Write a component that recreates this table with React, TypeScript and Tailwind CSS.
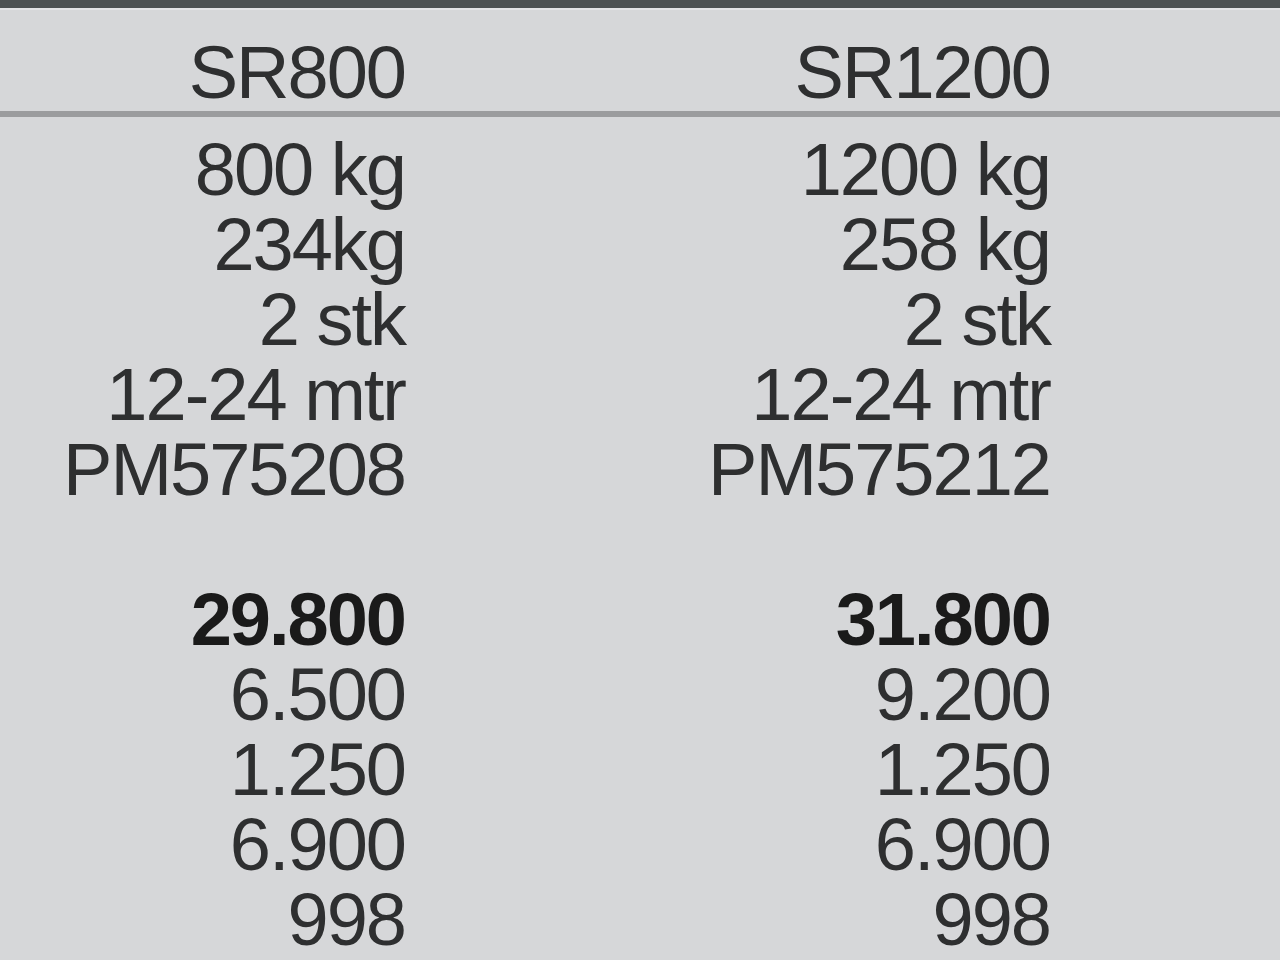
import React from 'react';

const specs: { a: string; b: string; bold?: boolean }[] = [
  { a: '800 kg', b: '1200 kg' },
  { a: '234kg', b: '258 kg' },
  { a: '2 stk', b: '2 stk' },
  { a: '12-24 mtr', b: '12-24 mtr' },
  { a: 'PM575208', b: 'PM575212' },
  { a: '', b: '' },
  { a: '29.800', b: '31.800', bold: true },
  { a: '6.500', b: '9.200' },
  { a: '1.250', b: '1.250' },
  { a: '6.900', b: '6.900' },
  { a: '998', b: '998' },
];

const App: React.FC = () => {
  return (
    <div
      className="min-h-screen bg-[#d6d7d9] text-[#2e2f30] overflow-hidden"
      style={{ fontFamily: '"Liberation Sans", Arial, sans-serif' }}
    >
      <div className="h-2 bg-[#4c5152]" />
      <div className="h-[2px] bg-[#e2e3e5]" />

      {/* Header */}
      <div className="grid grid-cols-[405px_645px] pt-[25px] text-[74px] leading-[75px] tracking-[-2px]">
        <div className="text-right">SR800</div>
        <div className="text-right">SR1200</div>
      </div>
      <div className="h-[6px] mt-px bg-[#9b9c9e]" />

      {/* Rows */}
      <div className="pt-[15px] text-[74px] leading-[75px] tracking-[-2px]">
        {specs.map((row, i) => (
          <div
            key={i}
            className={`grid grid-cols-[405px_645px] h-[75px] ${row.bold ? 'font-bold text-[#1a1a1a]' : ''}`}
          >
            <div className="text-right whitespace-nowrap">{row.a}</div>
            <div className="text-right whitespace-nowrap">{row.b}</div>
          </div>
        ))}
      </div>
    </div>
  );
};

export default App;
